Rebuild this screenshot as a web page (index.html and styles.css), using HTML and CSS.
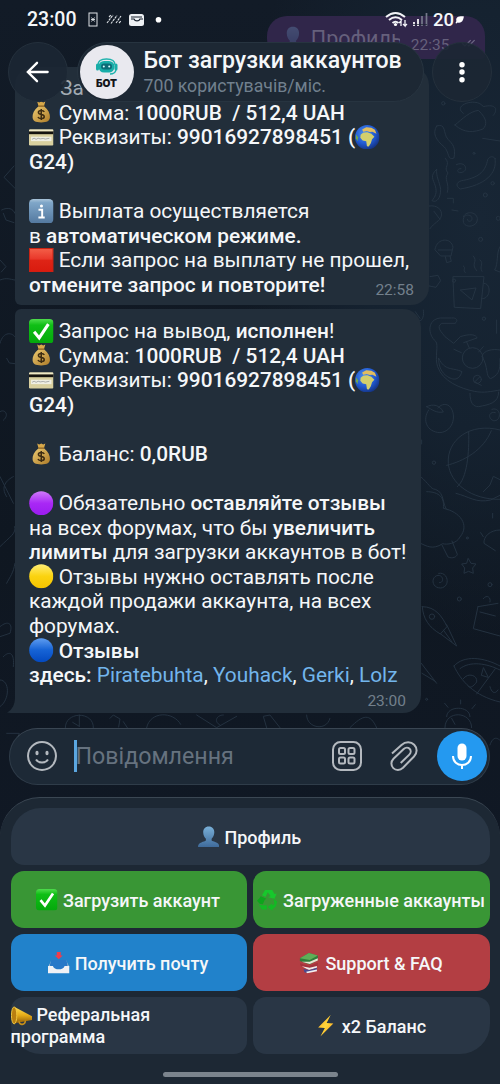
FILE: index.html
```html
<!DOCTYPE html>
<html lang="uk">
<head>
<meta charset="utf-8">
<title>Бот загрузки аккаунтов</title>
<link rel="stylesheet" href="styles.css">
</head>
<body>
<svg class="sprite" aria-hidden="true">
  <defs>
    <linearGradient id="gInfo" x1="0" y1="0" x2="0" y2="1"><stop offset="0" stop-color="#a9c4d9"/><stop offset=".15" stop-color="#7fa6c8"/><stop offset="1" stop-color="#53789f"/></linearGradient>
    <linearGradient id="gRed" x1="0" y1="0" x2="0" y2="1"><stop offset="0" stop-color="#f4614a"/><stop offset=".45" stop-color="#e9382a"/><stop offset=".5" stop-color="#df2416"/><stop offset="1" stop-color="#d81a0e"/></linearGradient>
    <linearGradient id="gGreen" x1="0" y1="0" x2="0" y2="1"><stop offset="0" stop-color="#4fdc4c"/><stop offset=".25" stop-color="#10bf16"/><stop offset="1" stop-color="#04a80c"/></linearGradient>
    <linearGradient id="gPurple" x1="0" y1="0" x2="0" y2="1"><stop offset="0" stop-color="#cf7bfb"/><stop offset=".5" stop-color="#a928f5"/><stop offset="1" stop-color="#9a1cf0"/></linearGradient>
    <linearGradient id="gYellow" x1="0" y1="0" x2="0" y2="1"><stop offset="0" stop-color="#ffee75"/><stop offset=".5" stop-color="#fbd310"/><stop offset="1" stop-color="#f5c400"/></linearGradient>
    <linearGradient id="gBlue" x1="0" y1="0" x2="0" y2="1"><stop offset="0" stop-color="#5f9df0"/><stop offset=".48" stop-color="#1764d6"/><stop offset="1" stop-color="#0349c0"/></linearGradient>
    <linearGradient id="gPerson" x1="0" y1="0" x2="0" y2="1"><stop offset="0" stop-color="#79b0d8"/><stop offset="1" stop-color="#3f6b9b"/></linearGradient>
    <linearGradient id="gBag" x1="0" y1="0" x2="1" y2="1"><stop offset="0" stop-color="#edcb72"/><stop offset="1" stop-color="#ad7b28"/></linearGradient>
    <radialGradient id="gSea" cx=".4" cy=".35" r=".7"><stop offset="0" stop-color="#4f93f2"/><stop offset=".6" stop-color="#2058d0"/><stop offset="1" stop-color="#14307a"/></radialGradient>
    <linearGradient id="gHorn" x1="0" y1="0" x2="0" y2="1"><stop offset="0" stop-color="#ffdf52"/><stop offset=".5" stop-color="#e6ac18"/><stop offset="1" stop-color="#8f5c08"/></linearGradient>
    <linearGradient id="gBolt" x1="0" y1="0" x2="1" y2="1"><stop offset="0" stop-color="#ff9f1c"/><stop offset=".5" stop-color="#ffd83b"/><stop offset="1" stop-color="#ff8a10"/></linearGradient>
  </defs>
  <symbol id="money" viewBox="0 0 24 24"><path d="M8 1.500l2 1 2-1 2 1 2-1-1.500 5h-5z" fill="#d8a94a"/><path d="M9.300 6C5 9.500 3.200 13.500 3.500 17c.3 3.500 2.500 5 8.500 5s8.200-1.500 8.500-5c.3-3.500-1.500-7.500-5.800-11z" fill="url(#gBag)"/><path d="M9 6h6" stroke="#8c6221" stroke-width="1.400"/><path d="M15 11.700c-.6-1-1.700-1.400-3-1.400-3.700 0-3.700 3.400 0 3.900 3.900.5 3.900 4 0 4-1.500 0-2.700-.5-3.200-1.600M12 8.700v11" fill="none" stroke="#3d2c12" stroke-width="1.500"/></symbol>
  <symbol id="card" viewBox="0 0 24 24"><rect y="4.500" width="24" height="15.500" rx="1.200" fill="#d9d09f"/><rect y="4.500" width="24" height="2" rx="1" fill="#eee8c4"/><rect y="6.300" width="24" height="2.700" fill="#15130e"/><rect x="2" y="11.500" width="20" height="4.300" fill="#f0efe2"/><path d="M3 14l2-1 2 1 2-1 2 .6 3-.4 2 .6 4-.8" fill="none" stroke="#8f9296" stroke-width=".7"/></symbol>
  <symbol id="globe" viewBox="0 0 24 24"><circle cx="12" cy="12" r="12" fill="url(#gSea)"/><path d="M5.500 9.500L8 7.500l4-.5 4 1.500 3 3-2.300 2.400-1.200 4-2 3.100-1.800-.2-.7-5-3.500-.6-2.300-2.700z" fill="#d3cf6c"/><path d="M7 4.500l4-2.300 5 .4 3.500 2L21 8.500l-4-2-2.500.3-3-1L8 6.500z" fill="#e2bd60"/><path d="M1 9l2 3-.5 4-1.700-3z" fill="#73a94a"/></symbol>
  <symbol id="info" viewBox="0 0 24 24"><rect width="24" height="24" rx="4.500" fill="url(#gInfo)"/><circle cx="12.200" cy="6.800" r="1.500" fill="#fff"/><path d="M9.300 10.600h3.600v7M9.200 18.200h6.200" fill="none" stroke="#fff" stroke-width="1.900"/></symbol>
  <symbol id="red" viewBox="0 0 24 24"><rect width="24" height="24" fill="url(#gRed)"/><rect x=".5" y=".5" width="23" height="23" fill="none" stroke="#c92414"/></symbol>
  <symbol id="check" viewBox="0 0 24 24"><rect width="24" height="24" rx="4" fill="url(#gGreen)"/><path d="M5 12.500l5 6L19 5" fill="none" stroke="#fff" stroke-width="3"/></symbol>
  <symbol id="purple" viewBox="0 0 24 24"><circle cx="12" cy="12" r="11.800" fill="url(#gPurple)"/></symbol>
  <symbol id="yellow" viewBox="0 0 24 24"><circle cx="12" cy="12" r="11.800" fill="url(#gYellow)"/></symbol>
  <symbol id="blue" viewBox="0 0 24 24"><circle cx="12" cy="12" r="11.800" fill="url(#gBlue)"/></symbol>
  <symbol id="person" viewBox="0 0 24 24"><path d="M12 .5c4 0 6.200 2.700 6.200 6.500 0 3-1.300 5.800-3 7.300v2c1.500 1.500 8.800 1.700 8.800 7.200H0c0-5.500 7.300-5.700 8.800-7.200v-2c-1.700-1.500-3-4.300-3-7.300C5.800 3.200 8 .5 12 .5z" fill="url(#gPerson)"/></symbol>
  <symbol id="recycle" viewBox="0 0 24 24"><path d="M5.500 7L9 1h8l2.500 4.500L22 5l-2.500 6-7-1.800 2.700-1.500L12 3.500 9.500 9z" fill="#17c82c"/><path d="M4 8l6.500 3-2 1.300L6.500 17 3 16.500 0 13l3-3z" fill="#0da51c"/><path d="M2 17.500l3.500 5.500H11v-5H6.500zM18.500 11l4 3.200-1.500 5.300L17 23v1.500l-5-4.500 5-4V18l2.500-1z" fill="#12ba24"/></symbol>
  <symbol id="inbox" viewBox="0 0 24 24"><path d="M4 9h16l4 8H0z" fill="#a9bed4"/><path d="M3.500 9h17l1.500 6-5 4H7l-5-4z" fill="#2778c8"/><path d="M0 15.500h5.500c1 5 12 5 13 0H24V24H0z" fill="#f0f1f5"/><path d="M12 8l4.500-4h-2.300V0H9.800v4H7.500z" fill="#ee3d4c"/></symbol>
  <symbol id="books" viewBox="0 0 24 24"><path d="M1 7l10-6 10 3v5l-9 5L1 10z" fill="#2f7d3a"/><path d="M1 7l10-6 10 3-9 5z" fill="#5fae57"/><path d="M12 11l9-4v2.500l-9 4-9-2.500z" fill="#e9e2d2"/><path d="M1 12.500l10 3 10-3.500v3l-9 3.500-10-3z" fill="#a2323c"/><path d="M3 16l9 1.500 8-2v2L11 20z" fill="#efeaea"/><path d="M5 19l7 1 8-2.500v3L9 23.500l-3-1z" fill="#4b4a8f"/><path d="M8 22l12-2.500v2L9 23.800z" fill="#f2eeee"/></symbol>
  <symbol id="horn" viewBox="0 0 24 24"><path d="M4 1l19.500 10.500v4L3 19.500z" fill="url(#gHorn)"/><ellipse cx="3.500" cy="10.500" rx="3" ry="9.500" fill="#b97f10" stroke="#f5cd42"/><path d="M9 17c0 5 7 4.500 7-.8" fill="none" stroke="#c68f1a" stroke-width="1.800"/></symbol>
  <symbol id="bolt" viewBox="0 0 24 24"><path d="M17.500 0L3.500 14l7.500.4L6 24 20.500 9.500l-7.500-.5z" fill="url(#gBolt)"/></symbol>
</svg>

<div class="screen">
  <svg class="wallpaper" viewBox="0 0 500 800" aria-hidden="true">
    <g transform="translate(250 90) scale(.3333)">
      <path d="M560 108c30-10 18 22 34 40 14 14 24 24 18 56-20 10-14-20-30-34-24-20-36-40-22-62M615 105c24-20 44-40 70-44 28 26 26 44 14 56-26 10-56 14-84-12zM640 70c-36-24 40-50 60-20 40-10 44 10 30 26M698 145l52 8M586 205c18 20-8 26 8 44-14 20 6 30-2 58M619 224c30-14 40 24 10 24-12-4-4-14 4-12M735 205c8 46-30 80-104 92-18-10-10-24 10-26 50-10 66-30 72-62 6-10 16-12 22-4zM560 238c-22 20-10 30-4 50 6 20 0 32-10 44 16 8 26-10 26-34-4-26-14-36-12-60M592 325h18v14M606 360l18 3"/>
      <path d="M538 348c24-4 40 12 36 30-4 16-22 20-34 38M552 364l18 24M640 380c10-20 44-14 42 10-2 24-46 26-42-2 2-18 28-16 26 0-2 8-14 8-14 0M555 478c6-36 50-36 54-6l-6 26h-30zM586 500l4 18 14-4-4-16M565 480h40M610 560l92 0-10 96-78-4zM702 580c24 0 20 50-8 46M632 600l46-6-12 36-14-12zM640 528c10 6-4 12 6 20M670 498c16 20-10 20 10 44M690 510c14 12-4 18 6 34M540 560l24-4 8 16-14 20-20-4M750 470c-12 20-4 50-16 70l16 6"/>
      <circle cx="580" cy="40" r="5"/><circle cx="672" cy="190" r="3"/><circle cx="706" cy="315" r="6"/><circle cx="692" cy="448" r="6"/><circle cx="612" cy="572" r="5"/><circle cx="728" cy="280" r="5"/><circle cx="745" cy="385" r="6"/>
    </g>
    <g transform="translate(250 310) scale(.3333)">
      <path d="M615 40c12-8 4-18-10-16h-34c-40 4-38 50-14 70 10 10-4 50 6 76 14 44 70 66 110 74 30 6 50 0 78-4M615 40h-40c-18 12 0 26 10 40l26 20 20-20c30-10 48-6 50 4l-40 14M566 145c20 40 40 26 70 40-10 30-30 26-50 10-16-14-20-32-20-50M612 118l22 10M650 96l8 18M700 110l-14 16M750 120c-20-4-50 0-54 20 20 30 10 60 26 66 20-10 30-20 28-60M660 250c0 30 10 40 26 40 30-6 60-10 60-44M690 200l-16 16 20 10"/>
      <circle cx="668" cy="144" r="31"/><circle cx="702" cy="26" r="5"/><circle cx="682" cy="208" r="12"/>
      <path d="M530 290c20-10 40-4 50 16-20 4-32-6-50-16zM536 300c-20 30-6 66 34 68 44-4 50-60 28-80-14-10-28-2-34 6M726 298c28-10 30 38 4 34-20-10-10-30 6-24M750 360c-90-24-160 30-155 100 4 60 70 110 155 108M656 366c2 60-4 140-34 164M590 466c50-12 110-44 134-104M700 545l20-20 10-26 20 10M512 500c24 20 30 38 44 38 30 10 20 50 36 62M515 390v12M496 5l14 20M520 0c4 20-6 40-16 30M740 30v40"/>
      <circle cx="552" cy="458" r="5"/>
    </g>
    <g transform="translate(250 490) scale(.3333)">
      <path d="M530 5c40 0 54 20 50 50 50 10 80 50 50 86-10 20-40 24-52 20-30 20-50 6-64 0M576 165l18 36c14 6 26 0 28-8l-16-40M618 10c40 10 60 30 104 20l28-14M728 70v14M700 140l-8-12M750 120c-30 0-50 20-48 40l34 22M655 206l8 14 15 2-10 12 2 16-14-6-14 6 2-16-9-12 14-2zM566 250c30-6 36 42 6 44-28 0-30-34-8-38 18 0 18 24 4 22M517 350c40 0 60 30 74 60l-20 22c-34-20-52-46-54-82zM590 404l30 64-48-36M580 420l26 36M684 350l60-10M684 350l-14 66 80 22M690 366l46 12M700 326c10-14 24-4 20 10M612 528c30-34 90-26 138 0M612 528c20 44 60 90 138 108M630 536c30-24 80-16 120 4M640 566c14-20 44-10 40 10-10 14-20 20-26 12M700 534l-6 22 20 6zM680 612l56-76M720 590c4 16 14 26 24 10M514 520l46 60M516 550l40 24M590 680c0-34 70-34 70 0M632 630v12M584 640l10 12M676 644l-10 12"/>
      <circle cx="628" cy="327" r="6"/><circle cx="720" cy="284" r="6"/><circle cx="652" cy="144" r="3"/><circle cx="530" cy="628" r="3"/><circle cx="546" cy="380" r="8"/>
    </g>
    <g transform="translate(0 715) scale(.3333)">
      <path d="M20 55h38l-6 16M196 38c0-50 86-50 84 0M238 0v34M238 34l-20-12M330 10l10-10 20 12-4 24M370 20l12 18M440 38c10-50 80-50 102-10M590 0l60 38 60-34M660 30c-20-10-10-30 10-30M800 38l-10-34 20-4 30 38M920 0c0 40 60 50 70 10M1050 38c40-40 60-44 80 0M1335 38c0-54 80-50 80 0M1355 10l10 18M1470 90c10-30 24-20 30-14"/>
    </g>
    <g transform="translate(0 90) scale(.3333)">
      <path d="M42 228L12 262l34 34M5 360c20-10 34-4 40 10M10 370l8 20 24 8M0 510l18 20-14 16M0 570c20-8 30-2 44 0M0 760c10-40 40-30 44-20M20 805l8 14 16 2M0 965c14-10 30 10 10 26M0 1160l40 80M20 1220c-20-30 0-50 20-60M0 1370c30-30 50-40 44-60M0 1610c24-20 40-10 30 20l-30 10M10 1700c20-20 34-10 30 30M0 1770c30 0 30 60 0 80M20 1480c10-20 20-30 25-60"/>
    </g>
  </svg>

  <main class="chat">
    <div class="bubble-out"><svg class="emo"><use href="#person"/></svg><span class="out-text">Профиль</span><span class="out-time">22:35</span><svg class="ticks" viewBox="0 0 16 10"><path d="M1 5l3 3 6-6M7 7l1 1 6-6"/></svg></div>

    <section class="bubble first">
      <div class="line dim">      За</div>
      <div class="line"><svg class="emo"><use href="#money"/></svg> Сумма: <b>1000RUB  / 512,4 UAH</b></div>
      <div class="line"><svg class="emo"><use href="#card"/></svg> Реквизиты: <b>99016927898451 (</b><svg class="emo"><use href="#globe"/></svg></div>
      <div class="line"><b>G24)</b></div>
      <div class="line"></div>
      <div class="line"><svg class="emo"><use href="#info"/></svg> Выплата осуществляется</div>
      <div class="line">в <b>автоматическом режиме.</b></div>
      <div class="line"><svg class="emo"><use href="#red"/></svg> Если запрос на выплату не прошел,</div>
      <div class="line last"><b>отмените запрос и повторите!</b><time>22:58</time></div>
    </section>

    <section class="bubble second">
      <div class="line"><svg class="emo"><use href="#check"/></svg> Запрос на вывод, <b>исполнен</b>!</div>
      <div class="line"><svg class="emo"><use href="#money"/></svg> Сумма: <b>1000RUB  / 512,4 UAH</b></div>
      <div class="line"><svg class="emo"><use href="#card"/></svg> Реквизиты: <b>99016927898451 (</b><svg class="emo"><use href="#globe"/></svg></div>
      <div class="line"><b>G24)</b></div>
      <div class="line"></div>
      <div class="line"><svg class="emo"><use href="#money"/></svg> Баланс: <b>0,0RUB</b></div>
      <div class="line"></div>
      <div class="line"><svg class="emo"><use href="#purple"/></svg> Обязательно <b>оставляйте отзывы</b></div>
      <div class="line">на всех форумах, что бы <b>увеличить</b></div>
      <div class="line"><b>лимиты</b> для загрузки аккаунтов в бот!</div>
      <div class="line"><svg class="emo"><use href="#yellow"/></svg> Отзывы нужно оставлять после</div>
      <div class="line">каждой продажи аккаунта, на всех</div>
      <div class="line">форумах.</div>
      <div class="line"><svg class="emo"><use href="#blue"/></svg> <b>Отзывы</b></div>
      <div class="line"><b>здесь:</b> <a>Piratebuhta</a>, <a>Youhack</a>, <a>Gerki</a>, <a>Lolz</a></div>
      <div class="line last"><time>23:00</time></div>
      <svg class="tail" viewBox="0 0 8 16"><path d="M8 0C8 8 5 13 0 15.500Q3 16 8 16z"/></svg>
    </section>
  </main>

  <div class="composer">
    <svg class="smile" viewBox="0 0 30 30"><circle cx="15" cy="15" r="14"/><path d="M9 18.500c2.500 4 9.500 4 12 0"/><ellipse class="eye" cx="10" cy="12" rx="1.600" ry="2.300"/><ellipse class="eye" cx="20" cy="12" rx="1.600" ry="2.300"/></svg>
    <span class="caret"></span><span class="placeholder">Повідомлення</span>
    <svg class="grid-icon" viewBox="0 0 30 30"><rect x="1" y="1" width="28" height="28" rx="7.500"/><rect x="7" y="7" width="6" height="6" rx="1.500"/><rect x="16.500" y="7" width="6" height="6" rx="1.500"/><rect x="7" y="16.500" width="6" height="6" rx="1.500"/><rect x="16.500" y="16.500" width="6" height="6" rx="1.500"/></svg>
    <svg class="clip" viewBox="0 0 30 30"><path d="M2 12.500L11.500 4C15.500.3 21 .5 24.200 3.800S27.500 12 24 15.500L13 26.700c-3 2.900-7.200 2.800-9.700.4s-2.600-6.600.2-9.400L13.700 8c1.900-1.800 4.400-1.700 5.900-.2s1.500 4-.3 5.800L10.700 22"/></svg>
    <span class="mic"><svg viewBox="0 0 50 50"><rect x="20.500" y="12.500" width="9" height="17" rx="4.500" fill="#fff"/><path d="M16 25c0 12 18 12 18 0M25 34v4" fill="none" stroke="#fff" stroke-width="2"/></svg></span>
  </div>

  <div class="keyboard">
    <div class="keys">
      <div class="key wide"><svg><use href="#person"/></svg><span>Профиль</span></div>
      <div class="key green"><svg><use href="#check"/></svg><span>Загрузить аккаунт</span></div>
      <div class="key green"><svg><use href="#recycle"/></svg><span>Загруженные аккаунты</span></div>
      <div class="key blue"><svg><use href="#inbox"/></svg><span>Получить почту</span></div>
      <div class="key red"><svg><use href="#books"/></svg><span>Support &amp; FAQ</span></div>
      <div class="key bottom-left"><p><svg><use href="#horn"/></svg> Реферальная<br>программа</p></div>
      <div class="key bottom-right"><svg><use href="#bolt"/></svg><span>x2 Баланс</span></div>
    </div>
    <div class="home"></div>
  </div>

  <header class="top">
    <div class="status">
      <span class="clock">23:00</span>
      <svg class="s-left" viewBox="0 0 76 16"><rect x="1" y="1" width="8" height="13" fill="none" stroke="#dfe3e7"/><path d="M3.500 5.500l3 4M6.500 5.500l-3 4M3 7.500h4" stroke="#dfe3e7" stroke-width=".9"/><path d="M19 11l6-8M23 11.500l6-8M28 11l5-7M21 5l2-2M31 11l2-2" stroke="#dfe3e7" stroke-width="1.100" stroke-dasharray="2.500 .7"/><rect x="41" y="2" width="15" height="12" rx="2.500" fill="#eef1f4"/><path d="M43 5h11M43 7h3c1 2.500 5 2.500 6 0h3" fill="none" stroke="#17212d" stroke-width="1.200"/><circle cx="70.500" cy="7.800" r="2.800" fill="#fff"/></svg>
      <svg class="s-right" viewBox="0 0 44 18"><g fill="none" stroke="#f2f4f7" stroke-width="2"><path d="M1 6Q10.500-2 20 6M4 9q6.500-5.500 13 0M7.500 12q3-2.500 6 0"/><path d="M16 15v-5l-2 2M20 9v6l-2-2M20 15l2-2" stroke-width="1.300"/></g><circle cx="10.500" cy="13.500" r="1.600" fill="#fff"/><g stroke-width="1.700"><path d="M29 11v4M33 8v7" stroke="#fff"/><path d="M37 5v10M41.500 2v13" stroke="#75798b"/></g><path d="M28 13.500h14" stroke="#1d2433" stroke-width=".7"/></svg>
      <span class="battery">20</span>
      <svg class="leaf" viewBox="0 0 10 9"><path d="M10 .5C4 0 .5 1.500 1.500 5.500L.5 8l1 .5L3 7.300c4 .9 6-1.300 7-6.800z"/></svg>
    </div>
    <div class="bar">
      <span class="round"><svg viewBox="0 0 60 60"><path d="M49 30H29M38 20.500L28.500 30l9.500 9.500" transform="translate(-9)"/></svg></span>
      <div class="title">
        <span class="avatar"><svg viewBox="0 0 54 54"><g fill="none" stroke="#1fb3ad" stroke-width="1.300"><path d="M18 20q0-6 8.500-6T35 20M36 25q-1 4-6 4"/></g><rect x="18.500" y="16" width="16" height="11.500" rx="5.500" fill="#18ada8"/><rect x="16" y="18.500" width="3" height="7" rx="1.500" fill="#18ada8"/><rect x="34.500" y="18.500" width="3" height="7" rx="1.500" fill="#18ada8"/><rect x="21" y="18.500" width="11" height="6" rx="3" fill="#0c6c77"/><circle cx="23.800" cy="21.500" r="1" fill="#d9ffff"/><circle cx="29.200" cy="21.500" r="1" fill="#d9ffff"/></svg><span class="bot">БОТ</span></span>
        <div class="names"><h1>Бот загрузки аккаунтов</h1><p>700 користувачів/міс.</p></div>
      </div>
      <span class="round"><svg viewBox="0 0 60 60"><g fill="#fff"><circle cx="30" cy="22.500" r="2.800"/><circle cx="30" cy="30" r="2.800"/><circle cx="30" cy="38" r="2.800"/></g></svg></span>
    </div>
  </header>
</div>
</body>
</html>
```
FILE: styles.css
```css
* { box-sizing: border-box; margin: 0; padding: 0; }

body {
  width: 500px;
  height: 1084px;
  overflow: hidden;
  background: #101823;
  font-family: Roboto, "Noto Sans", sans-serif;
  color: #f5f7f9;
}

.sprite { position: absolute; width: 0; height: 0; }

.screen {
  position: relative;
  display: flex;
  flex-direction: column;
  height: 1084px;
  overflow: hidden;
  background: radial-gradient(ellipse 240px 420px at 480px 220px, #182635 0%, #152230 50%, transparent 100%), linear-gradient(#121b27, #0f1721 50%, #111926 90%);
}

.wallpaper { position: absolute; left: 0; top: 0; width: 500px; height: 800px; fill: none; stroke: #293847; stroke-width: 3; stroke-linecap: round; opacity: .8; }

/* Messages */
.chat { position: relative; height: 728px; padding: 16px 0 15px 15px; display: flex; flex-direction: column; }

.bubble-out {
  align-self: flex-end;
  flex: none;
  display: flex;
  width: 218px;
  height: 43px;
  margin-right: 15px;
  padding: 10px 8px 0 14px;
  border-radius: 20px 20px 4px 20px;
  background: #30264a;
  color: #66607c;
}
.bubble-out .emo { margin: 0; opacity: .28; }
.out-text { flex: none; width: 89px; height: 17px; margin-left: 6px; overflow: hidden; font-size: 21.5px; line-height: 25px; }
.out-time { margin: 9px 0 0 11px; font-size: 15.5px; line-height: 20px; }
.ticks { width: 16px; height: 10px; margin: 12px 0 0 12px; fill: none; stroke: #6d6784; stroke-width: 1.3; }

.bubble { position: relative; flex: none; padding-left: 14px; background: #222e3a; }
.first { width: 414px; height: 238px; margin-top: 8px; padding-top: 9.4px; border-radius: 18px 18px 18px 6px; }
.second { width: 406px; height: 404px; margin-top: 4px; padding-top: 10.4px; border-radius: 6px 18px 18px 0; }

.line { height: 24.55px; font-size: 20.85px; line-height: 24.55px; white-space: pre; }
.line b { font-weight: 500; }
.line a { color: #72b5ec; }
.dim { color: #a3abb3; }
.emo { display: inline-block; width: 24.5px; height: 24.5px; margin: -3px 0; vertical-align: -2px; }
.line.last { display: flex; justify-content: space-between; padding-right: 15px; }
.line time { margin-left: auto; padding-top: 7px; font-size: 15.5px; line-height: 20px; color: #73808c; }
.second .line time { padding-top: 3px; }
.tail { position: absolute; left: -8px; bottom: 0; width: 8px; height: 16px; fill: #222e3a; }

/* Composer */
.composer {
  position: relative;
  flex: none;
  display: flex;
  align-items: center;
  width: 481px;
  height: 57px;
  margin-left: 9px;
  padding: 0 2px 1px 17px;
  border: 1px solid #2f3c49;
  border-top-color: #3a4653;
  border-radius: 29px;
  background: #1d2936;
}
.composer svg { flex: none; fill: none; stroke: #b4b9bf; stroke-width: 2; }
.smile, .grid-icon, .clip { width: 30px; height: 30px; }
.composer .eye { fill: #b4b9bf; stroke: none; }
.caret { width: 2.5px; height: 32px; margin-left: 17px; background: #5ba6e0; }
.placeholder { flex: 1; margin-left: -1px; font-size: 23.2px; line-height: 30px; color: #66727f; white-space: nowrap; }
.clip { margin-left: 28px; }
.mic { width: 50px; height: 50px; margin-left: 17px; border-radius: 50%; background: #2499f0; }
.composer .mic svg { display: block; width: 50px; height: 50px; stroke: none; }

/* Reply keyboard */
.keyboard {
  position: relative;
  flex: none;
  height: 287px;
  margin-top: 12px;
  padding: 10px 10.5px 0 10.5px;
  border-top: 1.5px solid #3b4753;
  border-radius: 40px 40px 0 0;
  background: #1d2834;
}
.keys { display: grid; grid-template-columns: 1fr 1fr; grid-auto-rows: 57px; gap: 6px; }
.key {
  display: flex;
  align-items: center;
  justify-content: center;
  gap: 5px;
  padding-top: 1px;
  border-radius: 13px;
  background: #293645;
  font-size: 18px;
  font-weight: 500;
  white-space: nowrap;
}
.key svg { flex: none; width: 21.5px; height: 21.5px; }
.key > svg { margin-left: -1px; }
.wide { grid-column: 1 / 3; border-radius: 30px 30px 13px 13px; }
.green { background: #399635; }
.blue { background: #2182cb; }
.red { background: #b33e43; }
.bottom-left { justify-content: flex-start; border-radius: 13px 13px 13px 30px; }
.bottom-left p { line-height: 22px; }
.bottom-left svg { display: inline-block; margin: -2px 0; vertical-align: -4px; }
.bottom-right { border-radius: 13px 13px 30px 13px; }
.home { width: 175px; height: 5px; margin: 18px auto 0; border-radius: 3px; background: #7b848d; }

/* Header floating over the messages */
.top { position: absolute; left: 0; top: 0; width: 500px; height: 106px; }
.status { display: flex; align-items: center; height: 42px; padding: 0 36px 2px 27px; }
.clock { width: 61px; font-size: 19.5px; font-weight: 500; line-height: 20px; }
.s-left { width: 76px; height: 16px; }
.s-right { width: 44px; height: 18px; margin-left: auto; }
.battery { width: 21px; margin-left: 4px; font-size: 18.5px; font-weight: 500; }
.leaf { width: 9px; height: 8px; margin-left: 1px; fill: #fff; }
.bar { display: flex; height: 60px; padding: 0 8px; justify-content: space-between; }
.round { width: 60px; height: 60px; border: 1px solid #24303c; border-radius: 50%; background: #1b2734e8; }
.round svg { display: block; width: 58px; height: 58px; fill: none; stroke: #fff; stroke-width: 2.4; stroke-linecap: round; }
.round g { stroke: none; }
.title { display: flex; width: 347px; margin-right: -1px; height: 60px; padding: 2px 0 0 1.5px; border: 1px solid #273440; border-radius: 30px; background: #1d2834; }
.avatar { flex: none; width: 54px; height: 54px; border-radius: 50%; background: #e9e9ef; text-align: center; color: #14161a; }
.avatar svg { display: block; width: 54px; height: 54px; margin-bottom: -21px; }
.bot { display: block; font: 900 10.2px/10px Inter, Roboto, sans-serif; }
.names { margin-left: 10px; white-space: nowrap; }
.names h1 { margin-top: 2px; font-size: 23.1px; font-weight: 500; line-height: 28px; }
.names p { font-size: 17.7px; line-height: 22px; color: #71808e; }
```
